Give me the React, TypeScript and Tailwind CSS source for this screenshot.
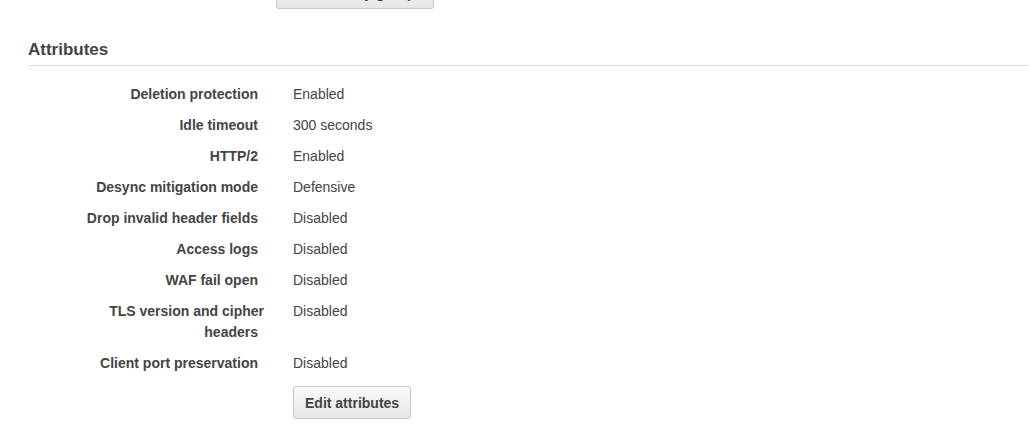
const ATTRIBUTES: { label: React.ReactNode; key: string; value: string }[] = [
  { key: "deletion", label: "Deletion protection", value: "Enabled" },
  { key: "idle", label: "Idle timeout", value: "300 seconds" },
  { key: "http2", label: "HTTP/2", value: "Enabled" },
  { key: "desync", label: "Desync mitigation mode", value: "Defensive" },
  { key: "drop", label: "Drop invalid header fields", value: "Disabled" },
  { key: "logs", label: "Access logs", value: "Disabled" },
  { key: "waf", label: "WAF fail open", value: "Disabled" },
  {
    key: "tls",
    label: (
      <>
        <span className="block -mr-[6px]">TLS version and cipher</span>
        <span className="block">headers</span>
      </>
    ),
    value: "Disabled",
  },
  { key: "port", label: "Client port preservation", value: "Disabled" },
];

function GrayButton({ children }: { children: React.ReactNode }) {
  return (
    <button
      type="button"
      className="h-[33px] px-[11px] rounded-[3px] border border-[#c8c8c8] bg-gradient-to-b from-[#fafafa] to-[#e6e6e6] text-[14px] font-bold text-[#444] leading-[20px] whitespace-nowrap"
    >
      {children}
    </button>
  );
}

export default function App() {
  return (
    <div
      className="min-h-screen bg-white text-[#444] overflow-hidden"
      style={{ fontFamily: '"Liberation Sans", Arial, sans-serif' }}
    >
      <div className="pl-[28px] pr-px">
        {/* tail of the section above, scrolled mostly out of view */}
        <div className="-mt-[24px] pl-[248px]">
          <div className="w-[158px] [&>button]:w-full">
            <GrayButton>Edit security groups</GrayButton>
          </div>
        </div>

        <h2 className="mt-[31px] text-[17px] leading-[20px] font-bold text-[#444] pb-[5px] border-b border-[#dedede]">
          Attributes
        </h2>

        <dl className="mt-[18px] flex flex-col gap-[10px] text-[14px] leading-[21px]">
          {ATTRIBUTES.map((a) => (
            <div key={a.key} className="flex">
              <dt className="ml-[40px] w-[190px] text-right font-bold text-[#444]">{a.label}</dt>
              <dd className="ml-[35px] text-[#444]">{a.value}</dd>
            </div>
          ))}
        </dl>

        <div className="mt-[12px] pl-[265px]">
          <GrayButton>Edit attributes</GrayButton>
        </div>
      </div>
    </div>
  );
}
